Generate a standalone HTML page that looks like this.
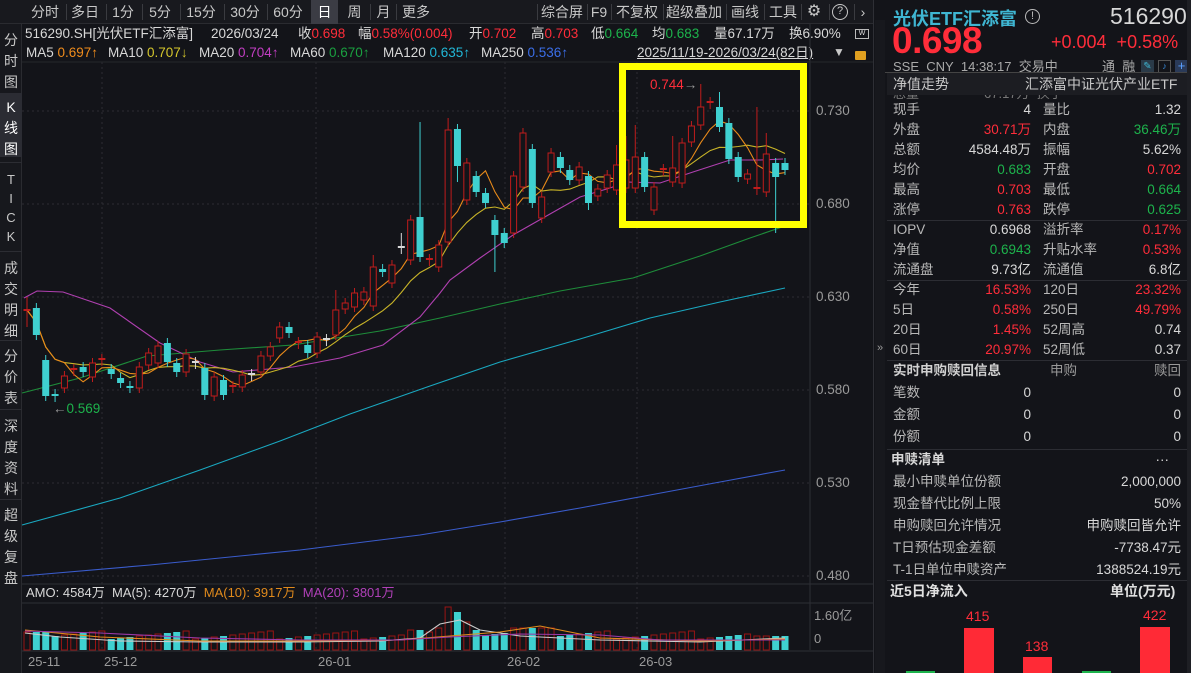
<!DOCTYPE html>
<html><head><meta charset="utf-8">
<style>
*{margin:0;padding:0;box-sizing:border-box}
body{width:1191px;height:673px;background:#131419;overflow:hidden;position:relative;font-family:"Liberation Sans","Noto Sans CJK SC",sans-serif;font-size:13px;color:#d0d0d0}
.a{position:absolute;white-space:nowrap}
.tb{position:absolute;top:0;height:24px;line-height:24px;font-size:14px;color:#c8c8c8;text-align:center}
.sep{position:absolute;top:4px;width:1px;height:16px;background:#3a3b40}
.vt{position:absolute;left:0;width:22px;text-align:center;font-size:14px;line-height:21px;color:#c8c8c8}
.r{color:#ff2d3a}.g{color:#1db34c}.w{color:#d8d8d8}.gr{color:#9a9a9a}
.i1{position:absolute;top:25px;font-size:13.5px;line-height:18px;white-space:nowrap}
.i2{position:absolute;top:44px;font-size:13.5px;line-height:18px;white-space:nowrap;color:#d8d8d8}
.row{position:absolute;left:893px;width:288px;height:20px;line-height:20px;font-size:13.5px}
.row span{position:absolute}
.l1{left:0;color:#b8b8b8}.v1{right:150px;text-align:right}.l2{left:150px;color:#b8b8b8}.v2{right:0;text-align:right}
.hl{position:absolute;height:1px;background:#2c2d33}
</style></head><body>
<div class="a" style="left:0;top:0;width:873px;height:24px;background:#18191e;border-bottom:1px solid #2a2b30"></div>
<div class="tb" style="left:26px;width:38px">分时</div>
<div class="sep" style="left:66px"></div>
<div class="tb" style="left:67px;width:36px">多日</div>
<div class="sep" style="left:106px"></div>
<div class="tb" style="left:107px;width:32px">1分</div>
<div class="sep" style="left:142px"></div>
<div class="tb" style="left:143px;width:34px">5分</div>
<div class="sep" style="left:180px"></div>
<div class="tb" style="left:181px;width:40px">15分</div>
<div class="sep" style="left:224px"></div>
<div class="tb" style="left:225px;width:40px">30分</div>
<div class="sep" style="left:267px"></div>
<div class="tb" style="left:268px;width:40px">60分</div>
<div class="tb" style="left:311px;width:27px;background:#3b3c44;color:#fff">日</div>
<div class="tb" style="left:340px;width:29px">周</div>
<div class="sep" style="left:370px"></div>
<div class="tb" style="left:371px;width:25px">月</div>
<div class="sep" style="left:396px"></div>
<div class="tb" style="left:397px;width:38px">更多</div>
<div class="sep" style="left:537px"></div>
<div class="tb" style="left:538px;width:48px">综合屏</div>
<div class="sep" style="left:587px"></div>
<div class="tb" style="left:588px;width:22px">F9</div>
<div class="sep" style="left:611px"></div>
<div class="tb" style="left:612px;width:50px">不复权</div>
<div class="sep" style="left:663px"></div>
<div class="tb" style="left:664px;width:60px">超级叠加</div>
<div class="sep" style="left:726px"></div>
<div class="tb" style="left:727px;width:36px">画线</div>
<div class="sep" style="left:764px"></div>
<div class="tb" style="left:765px;width:36px">工具</div>
<div class="sep" style="left:801px"></div>
<div class="tb" style="left:803px;width:22px;font-size:16px">⚙</div>
<div class="sep" style="left:829px"></div>
<div class="a" style="left:832px;top:4px;width:16px;height:16px;border:1.5px solid #c8c8c8;border-radius:50%;font-size:11px;line-height:13px;text-align:center;color:#c8c8c8">?</div>
<div class="sep" style="left:854px"></div>
<div class="tb" style="left:856px;width:14px">›</div>

<div class="a" style="left:0;top:24px;width:22px;height:649px;background:#17181d;border-right:1px solid #2a2b30"></div>
<div class="vt" style="top:30px">分<br>时<br>图</div>
<div class="a" style="left:0;top:93px;width:22px;height:64px;background:#2b2c33"></div>
<div class="vt" style="top:97px;color:#fff">K<br>线<br>图</div>
<div class="hl" style="left:0;top:162px;width:22px"></div>
<div class="vt" style="top:170px;font-size:13px;line-height:19px">T<br>I<br>C<br>K</div>
<div class="hl" style="left:0;top:251px;width:22px"></div>
<div class="vt" style="top:258px">成<br>交<br>明<br>细</div>
<div class="hl" style="left:0;top:340px;width:22px"></div>
<div class="vt" style="top:346px">分<br>价<br>表</div>
<div class="hl" style="left:0;top:409px;width:22px"></div>
<div class="vt" style="top:416px">深<br>度<br>资<br>料</div>
<div class="hl" style="left:0;top:499px;width:22px"></div>
<div class="vt" style="top:505px">超<br>级<br>复<br>盘</div>

<div class="i1 w" style="left:25px">516290.SH[光伏ETF汇添富]</div>
<div class="i1 w" style="left:211px">2026/03/24</div>
<div class="i1" style="left:298px"><span class="w">收</span><span class="r">0.698</span></div>
<div class="i1" style="left:358px"><span class="w">幅</span><span class="r">0.58%(0.004)</span></div>
<div class="i1" style="left:469px"><span class="w">开</span><span class="r">0.702</span></div>
<div class="i1" style="left:531px"><span class="w">高</span><span class="r">0.703</span></div>
<div class="i1" style="left:591px"><span class="w">低</span><span class="g">0.664</span></div>
<div class="i1" style="left:652px"><span class="w">均</span><span class="g">0.683</span></div>
<div class="i1 w" style="left:714px">量67.17万</div>
<div class="i1 w" style="left:789px">换6.90%</div>
<div class="i2" style="left:26px">MA5 <span style="color:#f08c1c">0.697↑</span></div>
<div class="i2" style="left:108px">MA10 <span style="color:#d4c62c">0.707↓</span></div>
<div class="i2" style="left:199px">MA20 <span style="color:#c23ec2">0.704↑</span></div>
<div class="i2" style="left:290px">MA60 <span style="color:#1aa040">0.670↑</span></div>
<div class="i2" style="left:383px">MA120 <span style="color:#22b8d8">0.635↑</span></div>
<div class="i2" style="left:481px">MA250 <span style="color:#3b6ee8">0.536↑</span></div>
<div class="i2" style="left:637px;text-decoration:underline">2025/11/19-2026/03/24(82日)</div>
<div class="a" style="left:833px;top:45px;font-size:12px;color:#c8c8c8">▼</div>
<div class="a" style="left:855px;top:29px;width:14px;height:10px;border:1.5px solid #bbb;font-size:7px;line-height:7px;color:#ddd;text-align:center">W</div>
<div class="a" style="left:855px;top:51px;width:11px;height:9px;background:#e0a020;border-radius:1px"></div>

<svg class="a" style="left:0;top:0" width="873" height="673" id="ch"></svg>

<div class="a gr" style="left:816px;top:103px;font-size:13.5px">0.730</div>
<div class="a gr" style="left:816px;top:196px;font-size:13.5px">0.680</div>
<div class="a gr" style="left:816px;top:289px;font-size:13.5px">0.630</div>
<div class="a gr" style="left:816px;top:382px;font-size:13.5px">0.580</div>
<div class="a gr" style="left:816px;top:475px;font-size:13.5px">0.530</div>
<div class="a gr" style="left:816px;top:568px;font-size:13.5px">0.480</div>
<div class="a r" style="left:650px;top:77px;font-size:13.5px">0.744<span class="gr">→</span></div>
<div class="a g" style="left:53px;top:401px;font-size:13.5px"><span class="gr">←</span>0.569</div>
<div class="a" style="left:26px;top:585px;font-size:13px;line-height:16px"><span class="w">AMO: 4584万&nbsp;&nbsp;MA(5): 4270万&nbsp;&nbsp;</span><span style="color:#e08a1c">MA(10): 3917万&nbsp;&nbsp;</span><span style="color:#b040b8">MA(20): 3801万</span></div>
<div class="a gr" style="left:814px;top:605px;font-size:13px">1.60亿</div>
<div class="a gr" style="left:814px;top:631px;font-size:13px">0</div>
<div class="a gr" style="left:28px;top:654px;font-size:13px">25-11</div>
<div class="a gr" style="left:104px;top:654px;font-size:13px">25-12</div>
<div class="a gr" style="left:318px;top:654px;font-size:13px">26-01</div>
<div class="a gr" style="left:507px;top:654px;font-size:13px">26-02</div>
<div class="a gr" style="left:639px;top:654px;font-size:13px">26-03</div>

<div class="a" style="left:873px;top:0;width:1px;height:673px;background:#2e2f35"></div>
<div class="a" style="left:875px;top:20px;width:10px;height:653px;background:#17181d"></div>
<div class="a gr" style="left:877px;top:342px;font-size:11px">»</div>
<div class="a" style="left:893px;top:5px;font-size:18px;font-weight:bold;color:#3fb6d2">光伏ETF汇添富</div>
<div class="a" style="left:1025px;top:9px;width:15px;height:15px;border:1.5px solid #bbb;border-radius:50%;font-size:11px;line-height:12px;text-align:center;color:#bbb">!</div>
<div class="a" style="left:1110px;top:3px;font-size:23px;color:#d8d8d8">516290</div>
<div class="a" style="left:892px;top:20px;font-size:37px;font-weight:bold;color:#ff2d3a;letter-spacing:-0.5px">0.698</div>
<div class="a r" style="left:1051px;top:32px;font-size:18px">+0.004&nbsp;&nbsp;+0.58%</div>
<div class="a gr" style="left:893px;top:56px;font-size:13px;color:#aaa">SSE&nbsp;&nbsp;CNY&nbsp;&nbsp;14:38:17&nbsp;&nbsp;交易中</div>
<div class="a gr" style="left:1102px;top:56px;font-size:13px;color:#aaa">通&nbsp;&nbsp;融</div>
<div class="a" style="left:1141px;top:60px;width:13px;height:13px;background:#2a3a48;color:#3fb6d2;font-size:10px;line-height:13px;text-align:center">✎</div>
<div class="a" style="left:1158px;top:60px;width:13px;height:13px;border:1px solid #555;color:#3a8ee0;font-size:9px;line-height:11px;text-align:center">♪</div>
<div class="a" style="left:1175px;top:60px;width:13px;height:13px;background:#2a3a58;color:#5aa0ff;font-size:13px;line-height:12px;text-align:center">+</div>
<div class="hl" style="left:885px;top:72px;width:306px;background:#444"></div>
<div class="a" style="left:887px;top:73px;width:300px;height:22px;background:#1c1d22"></div>
<div class="a" style="left:893px;top:74px;font-size:14px;color:#c8c8c8">净值走势</div>
<div class="a" style="left:1025px;top:74px;font-size:14px;color:#c8c8c8">汇添富中证光伏产业ETF</div>
<div class="a" style="left:893px;top:95px;height:4px;width:290px;overflow:hidden"><div style="margin-top:-12px;font-size:13px;color:#777">总量&nbsp;&nbsp;&nbsp;&nbsp;&nbsp;&nbsp;&nbsp;&nbsp;&nbsp;&nbsp;&nbsp;&nbsp;&nbsp;&nbsp;&nbsp;&nbsp;&nbsp;&nbsp;67.17万&nbsp;&nbsp;换手</div></div>

<div class="row" style="top:100px"><span class="l1">现手</span><span class="v1 w">4</span><span class="l2">量比</span><span class="v2 w">1.32</span></div>
<div class="row" style="top:120px"><span class="l1">外盘</span><span class="v1 r">30.71万</span><span class="l2">内盘</span><span class="v2 g">36.46万</span></div>
<div class="row" style="top:140px"><span class="l1">总额</span><span class="v1 w">4584.48万</span><span class="l2">振幅</span><span class="v2 w">5.62%</span></div>
<div class="row" style="top:160px"><span class="l1">均价</span><span class="v1 g">0.683</span><span class="l2">开盘</span><span class="v2 r">0.702</span></div>
<div class="row" style="top:180px"><span class="l1">最高</span><span class="v1 r">0.703</span><span class="l2">最低</span><span class="v2 g">0.664</span></div>
<div class="row" style="top:200px"><span class="l1">涨停</span><span class="v1 r">0.763</span><span class="l2">跌停</span><span class="v2 g">0.625</span></div>
<div class="hl" style="left:887px;top:220px;width:300px"></div>
<div class="row" style="top:220px"><span class="l1">IOPV</span><span class="v1 w">0.6968</span><span class="l2">溢折率</span><span class="v2 r">0.17%</span></div>
<div class="row" style="top:240px"><span class="l1">净值</span><span class="v1 g">0.6943</span><span class="l2">升贴水率</span><span class="v2 r">0.53%</span></div>
<div class="row" style="top:260px"><span class="l1">流通盘</span><span class="v1 w">9.73亿</span><span class="l2">流通值</span><span class="v2 w">6.8亿</span></div>
<div class="hl" style="left:887px;top:280px;width:300px"></div>
<div class="row" style="top:280px"><span class="l1">今年</span><span class="v1 r">16.53%</span><span class="l2">120日</span><span class="v2 r">23.32%</span></div>
<div class="row" style="top:300px"><span class="l1">5日</span><span class="v1 r">0.58%</span><span class="l2">250日</span><span class="v2 r">49.79%</span></div>
<div class="row" style="top:320px"><span class="l1">20日</span><span class="v1 r">1.45%</span><span class="l2">52周高</span><span class="v2 w">0.74</span></div>
<div class="row" style="top:340px"><span class="l1">60日</span><span class="v1 r">20.97%</span><span class="l2">52周低</span><span class="v2 w">0.37</span></div>
<div class="hl" style="left:887px;top:360px;width:300px"></div>
<div class="row" style="top:361px"><span class="l1" style="font-weight:bold;color:#d0d0d0">实时申购赎回信息</span><span style="left:157px;color:#999">申购</span><span class="v2" style="color:#999">赎回</span></div>
<div class="row" style="top:383px"><span class="l1">笔数</span><span class="v1 w">0</span><span class="v2 w">0</span></div>
<div class="row" style="top:405px"><span class="l1">金额</span><span class="v1 w">0</span><span class="v2 w">0</span></div>
<div class="row" style="top:427px"><span class="l1">份额</span><span class="v1 w">0</span><span class="v2 w">0</span></div>
<div class="hl" style="left:887px;top:449px;width:300px"></div>
<div class="row" style="top:450px"><span class="l1" style="font-weight:bold;color:#d8d8d8;left:-2px">申赎清单</span><span class="v2 w" style="right:12px">···</span></div>
<div class="row" style="top:472px"><span class="l1">最小申赎单位份额</span><span class="v2 w">2,000,000</span></div>
<div class="row" style="top:494px"><span class="l1">现金替代比例上限</span><span class="v2 w">50%</span></div>
<div class="row" style="top:516px"><span class="l1">申购赎回允许情况</span><span class="v2 w">申购赎回皆允许</span></div>
<div class="row" style="top:538px"><span class="l1">T日预估现金差额</span><span class="v2 w">-7738.47元</span></div>
<div class="row" style="top:560px"><span class="l1">T-1日单位申赎资产</span><span class="v2 w">1388524.19元</span></div>
<div class="hl" style="left:887px;top:580px;width:300px"></div>
<div class="a" style="left:890px;top:581px;font-size:14px;font-weight:bold;color:#e0e0e0">近5日净流入</div>
<div class="a" style="left:1110px;top:581px;font-size:14px;font-weight:bold;color:#e0e0e0">单位(万元)</div>
<div class="a r" style="left:966px;top:608px;font-size:14px">415</div>
<div class="a" style="left:964px;top:628px;width:30px;height:45px;background:#ff2a36"></div>
<div class="a r" style="left:1025px;top:638px;font-size:14px">138</div>
<div class="a" style="left:1023px;top:657px;width:29px;height:16px;background:#ff2a36"></div>
<div class="a r" style="left:1143px;top:607px;font-size:14px">422</div>
<div class="a" style="left:1140px;top:627px;width:30px;height:46px;background:#ff2a36"></div>
<div class="a" style="left:906px;top:671px;width:29px;height:2px;background:#1db34c"></div>
<div class="a" style="left:1082px;top:671px;width:29px;height:2px;background:#1db34c"></div>
<div class="a" style="left:1187px;top:0;width:4px;height:673px;background:#1e1f24"></div>

<script>
var D=[[310,312,'d'],[308,335,'c'],[360,396,'c'],[394,396,'c'],[376,388,'r'],[369,371,'d'],[367,372,'c'],[363,377,'r'],[359,361,'d'],[369,374,'c'],[378,383,'c'],[386,388,'c'],[367,388,'r'],[353,365,'r'],[346,363,'r'],[343,362,'c'],[363,372,'c'],[354,372,'r'],[362,364,'w'],[368,395,'c'],[377,396,'r'],[380,395,'c'],[386,388,'d'],[375,387,'r'],[374,376,'w'],[356,372,'r'],[347,356,'r'],[327,338,'r'],[327,333,'c'],[342,344,'d'],[345,353,'c'],[337,353,'r'],[339,341,'w'],[310,335,'r'],[303,309,'r'],[293,307,'r'],[292,300,'r'],[267,306,'r'],[269,272,'c'],[265,283,'r'],[247,249,'w'],[220,260,'r'],[217,257,'c'],[259,261,'d'],[245,267,'r'],[130,242,'r'],[129,166,'c'],[163,200,'r'],[176,192,'c'],[193,203,'c'],[220,235,'c'],[233,243,'c'],[176,233,'r'],[133,187,'r'],[149,203,'c'],[197,218,'r'],[153,172,'r'],[157,168,'c'],[170,180,'c'],[167,180,'r'],[176,203,'c'],[189,196,'r'],[175,188,'r'],[165,190,'r'],[160,188,'r'],[157,188,'r'],[157,187,'c'],[187,210,'r'],[169,171,'d'],[168,182,'r'],[143,183,'r'],[126,142,'r'],[107,125,'r'],[102,104,'d'],[107,127,'c'],[123,159,'c'],[157,177,'c'],[174,179,'r'],[188,190,'d'],[154,192,'r'],[163,177,'c'],[163,170,'c']];
var HI={2:355,42:122,45:118,53:128,63:145,65:125,69:136,72:84,74:92,78:107,79:133,40:233,37:255,0:297,33:290,64:136};
var LO={0:327,3:402,50:272,80:233,46:182,60:210,1:340};
var N=D.length,sp=(785-27)/(N-1),s='';
function X(i){return 27+i*sp}
[111,204,297,390,483,576].forEach(function(y){s+='<line x1="22" y1="'+y+'" x2="810" y2="'+y+'" stroke="#2c2d33" stroke-dasharray="2,3"/>'});
[102,316,505,637].forEach(function(x){s+='<line x1="'+x+'" y1="62" x2="'+x+'" y2="650" stroke="#2c2d33" stroke-dasharray="2,3"/>'});
s+='<line x1="810" y1="24" x2="810" y2="650" stroke="#2e2f35"/>';
s+='<line x1="22" y1="584" x2="873" y2="584" stroke="#2e2f35"/><line x1="22" y1="603" x2="873" y2="603" stroke="#2e2f35"/><line x1="22" y1="651" x2="873" y2="651" stroke="#2e2f35"/>';
s+='<line x1="22" y1="62" x2="873" y2="62" stroke="#26272c"/>';
function pl(p,c){return '<polyline fill="none" stroke="'+c+'" stroke-width="1.1" points="'+p+'"/>'}
s+=pl('22,525 120,498 200,470 280,441 350,414 430,386 500,362 580,339 650,318 720,302 785,288','#1aa8c0');
s+=pl('22,576 150,565 300,550 420,535 500,522 580,508 650,495 720,482 785,470','#3a5ccc');
s+=pl('22,393 80,378 147,356 220,350 293,345 380,331 440,318 500,304 560,291 633,278 700,256 750,238 785,226','#1e8c3a');
s+=pl('24,298 37,291 63,292 110,308 160,343 200,362 233,372 293,367 340,358 383,345 420,317 440,293 450,280 480,258 513,235 550,214 580,197 610,188 627,182 660,183 693,172 730,160 760,160 783,159','#b040b0');
function ma(n,c){var p=[];for(var i=0;i<N;i++){var k=Math.min(n,i+1),t=0;for(var j=i-k+1;j<=i;j++){var d=D[j];t+=(d[2]=='c'?d[1]:d[0]);}p.push(X(i).toFixed(1)+','+(t/k).toFixed(1));}return pl(p.join(' '),c)}
s+=ma(10,'#c8b428');s+=ma(5,'#e88a1a');
var vs='';
for(var i=0;i<N;i++){var d=D[i],x=X(i),t=d[2],h=HI[i]||d[0]-5,l=LO[i]||d[1]+5;
 var col=t=='c'?'#3fd0d0':(t=='w'?'#d8d8d8':'#c01c1c');
 s+='<line x1="'+x+'" y1="'+h+'" x2="'+x+'" y2="'+l+'" stroke="'+col+'" stroke-width="1"/>';
 var bh=Math.max(d[1]-d[0],1.2);
 if(t=='c')s+='<rect x="'+(x-3.5)+'" y="'+d[0]+'" width="7" height="'+bh+'" fill="#3fd0d0"/>';
 else if(t=='r')s+='<rect x="'+(x-3)+'" y="'+d[0]+'" width="6" height="'+bh+'" fill="#131419" stroke="#c01c1c"/>';
 else s+='<line x1="'+(x-3.5)+'" y1="'+d[0]+'" x2="'+(x+3.5)+'" y2="'+d[0]+'" stroke="'+col+'" stroke-width="2"/>';
 var v=11+((i*37)%9);if(i<3)v=18;if(i>=44&&i<=48)v=[22,43,38,28,20][i-44];if(i>=52&&i<=56)v=22;if(i==41||i==42)v=20;if(i>=78)v=14;
 var vy=650-v;
 if(t=='c')vs+='<rect x="'+(x-3.5)+'" y="'+vy+'" width="7" height="'+v+'" fill="#3fd0d0"/>';
 else vs+='<rect x="'+(x-3)+'" y="'+vy+'" width="6" height="'+v+'" fill="none" stroke="#9a1414"/>';
}
s+=vs;
s+=pl('25,633 60,637 120,641 200,642 300,642 380,641 420,638 440,624 460,620 480,630 520,636 600,640 700,642 785,638','#cccccc');
s+=pl('25,630 100,637 200,641 300,641 400,640 450,636 500,632 540,626 600,638 700,641 785,639','#e08a1c');
s+=pl('25,631 100,633 200,638 300,640 400,640 450,637 520,634 600,635 660,640 785,640','#9a3aa8');
s+='<rect x="622.5" y="66.5" width="181" height="158" fill="none" stroke="#ffff00" stroke-width="7"/>';
document.getElementById('ch').innerHTML=s;
</script>
</body></html>
